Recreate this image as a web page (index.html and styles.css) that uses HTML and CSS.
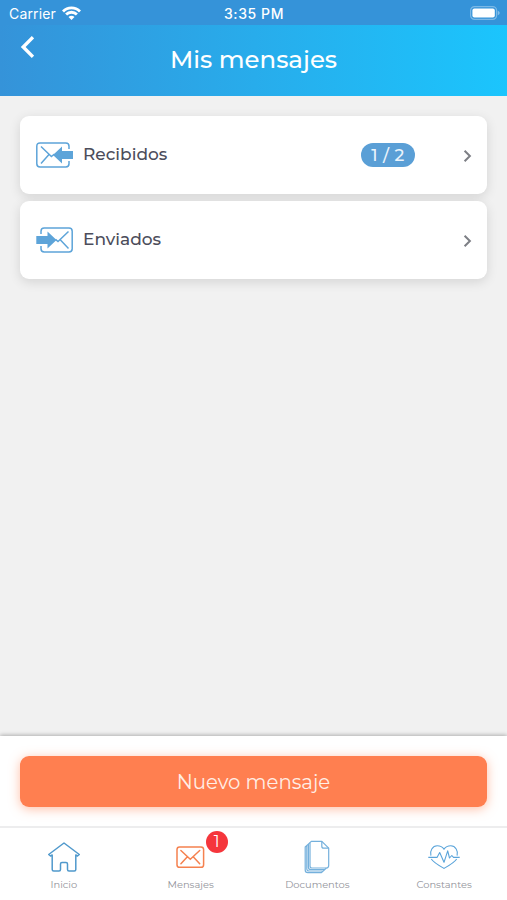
FILE: index.html
```html
<!DOCTYPE html>
<html lang="es">
<head>
    <meta charset="UTF-8">
    <meta name="viewport" content="width=device-width, initial-scale=1.0">
    <title>Mis mensajes</title>
    <link rel="stylesheet" href="styles.css">
</head>
<body>
    <div class="status-bar">
        <div class="carrier">
            <span>Carrier</span>
            <svg width="19" height="14" viewBox="0 0 19 14" fill="none" stroke="#fff" stroke-width="2.8">
                <path d="M1 5.4C5.7 .6 13.3 .6 18 5.4"/>
                <path d="M4.1 8.5C7 5.5 12 5.5 14.9 8.5"/>
                <path d="M9.5 14L6.5 10.9C8.2 9.4 10.8 9.4 12.5 10.9Z" fill="#fff" stroke="none"/>
            </svg>
        </div>
        <span class="time">3:35 PM</span>
        <div class="battery">
            <svg width="31" height="14" viewBox="0 0 31 14">
                <rect x=".6" y=".6" width="26" height="12.8" rx="4" fill="none" stroke="#fff" stroke-opacity=".35" stroke-width="1.2"/>
                <rect x="2.4" y="2.4" width="22.4" height="9.2" rx="2" fill="#fff"/>
                <path d="M27.8 4.8C30.3 5.6 30.3 8.4 27.8 9.2Z" fill="#fff" fill-opacity=".4"/>
            </svg>
        </div>
    </div>
    <header class="header">
        <a class="back">
            <svg width="14" height="22" viewBox="0 0 14 22" fill="none" stroke="#fff" stroke-width="3.4">
                <path d="M13 1.2L3.2 11L13 20.8"/>
            </svg>
        </a>
        <h1>Mis mensajes</h1>
    </header>

    <main class="list">
        <div class="card">
            <svg class="card-icon" width="38" height="26" viewBox="0 0 38 26" fill="none" stroke="#5da4d9" stroke-width="1.5">
                <path d="M33 7V4.2Q33 1 29.8 1H4Q.8 1 .8 4.2V21.8Q.8 25 4 25H29.8Q33 25 33 21.8V19"/>
                <path d="M5 4.5L15.4 14.6L18.5 12M5 21.5L13 12.5"/>
                <path d="M17 13L26 4.5V9H37V17H26V21.5Z" fill="#5da4d9" stroke="none"/>
            </svg>
            <span class="label">Recibidos</span>
            <span class="count">1 / 2</span>
            <svg class="arrow" width="9" height="14" viewBox="0 0 9 14" fill="none" stroke="#7d7f85" stroke-width="2">
                <path d="M1.6 1.7L6.9 7L1.6 12.3"/>
            </svg>
        </div>
        <div class="card">
            <svg class="card-icon" width="38" height="26" viewBox="0 0 38 26" fill="none" stroke="#5da4d9" stroke-width="1.5">
                <path d="M5 7V4.2Q5 1 8.2 1H33Q36.2 1 36.2 4.2V21.8Q36.2 25 33 25H8.2Q5 25 5 21.8V19"/>
                <path d="M32.5 4.5L22 14.6L19.5 12.4M32.5 21.5L24 12.6"/>
                <path d="M20.5 13L11.5 4.5V9H.3V17H11.5V21.5Z" fill="#5da4d9" stroke="none"/>
            </svg>
            <span class="label">Enviados</span>
            <svg class="arrow" width="9" height="14" viewBox="0 0 9 14" fill="none" stroke="#7d7f85" stroke-width="2">
                <path d="M1.6 1.7L6.9 7L1.6 12.3"/>
            </svg>
        </div>
    </main>

    <div class="actions">
        <button class="new-message">Nuevo mensaje</button>
    </div>

    <nav class="tabs">
        <a class="tab">
            <svg width="34" height="34" viewBox="0 0 34 34" fill="none" stroke="#5099cc" stroke-width="1.5" stroke-linejoin="round">
                <path d="M17 3L32.3 14.5L30.5 16L28.8 15V29.5Q28.8 31 27.3 31H22Q20.5 31 20.5 29.5V24Q20.5 22.5 19 22.5H15Q13.5 22.5 13.5 24V29.5Q13.5 31 12 31H6.7Q5.2 31 5.2 29.5V15L3.5 16L1.7 14.5Z"/>
            </svg>
            <span class="tab-name">Inicio</span>
        </a>
        <a class="tab">
            <svg width="34" height="34" viewBox="0 0 34 34" fill="none" stroke="#f5814f" stroke-width="1.5" stroke-linecap="round">
                <rect x="3" y="7" width="26.6" height="20.3" rx="2.6"/>
                <path d="M6.9 10.5L16.3 19.2L25.7 10.5M6.9 23.8L13.4 16.7M25.7 23.8L19.2 16.7"/>
            </svg>
            <span class="badge">1</span>
            <span class="tab-name">Mensajes</span>
        </a>
        <a class="tab">
            <svg width="34" height="34" viewBox="0 0 34 34" fill="none" stroke="#74b0dc" stroke-width="1.2" stroke-linejoin="round">
                <path d="M11.3 1.3H21.8L28.7 8.2V25.5Q28.7 28 26.2 28H11.8Q10 28 10 26V2.6Z"/>
                <path d="M21.8 1.3V6.2Q21.8 8.2 23.8 8.2H28.7"/>
                <path d="M10 2.6L5.2 7V30Q5.2 32.6 7.8 32.6H21.5L26.4 28M8.4 4.2V27.2Q8.4 29.5 10.7 29.5H24.8M6.8 5.6V28.8Q6.8 31 9 31H23.2"/>
            </svg>
            <span class="tab-name">Documentos</span>
        </a>
        <a class="tab">
            <svg width="34" height="34" viewBox="0 0 34 34" fill="none" stroke="#5aa4da" stroke-width="1.1" stroke-linejoin="round">
                <path d="M3.9 15.7C2.5 11 5.6 5.8 10.2 5.8C13.2 5.8 15.5 7 17 9.3C18.5 7 20.8 5.8 23.8 5.8C28.4 5.8 31.5 11 30.1 15.7M4.3 19C6.5 22.5 12.5 25.8 17 28.4C21.5 25.8 27.5 22.5 29.7 19"/>
                <path d="M1.3 17.4H10L12.7 12.5L17 22.3L20.7 10.8L22.5 18L24.8 15.5L26.5 17.4H32.7"/>
            </svg>
            <span class="tab-name">Constantes</span>
        </a>
    </nav>
</body>
</html>
```

FILE: styles.css
```css
* {
    box-sizing: border-box;
}
body {
    margin: 0;
    height: 900px;
    display: flex;
    flex-direction: column;
    overflow: hidden;
    background-color: #f1f1f1;
    font-family: Montserrat, Inter, sans-serif;
}
svg {
    display: block;
    flex: none;
}
.status-bar {
    display: grid;
    grid-template-columns: 1fr auto 1fr;
    align-items: center;
    height: 25px;
    padding: 2px 6px 0 9px;
    background-color: #3593d9;
    color: white;
    font-family: Inter, sans-serif;
    font-size: 14px;
}
.carrier {
    display: flex;
    align-items: center;
    gap: 6px;
    letter-spacing: 0.15px;
}
.carrier svg {
    margin-top: -2px;
}
.time {
    margin-right: 2px;
    font-weight: 500;
    letter-spacing: 0.6px;
}
.battery {
    display: flex;
    justify-content: flex-end;
    margin-top: -2px;
}
.header {
    display: grid;
    grid-template-columns: 40px 1fr 40px;
    height: 71px;
    padding: 0 20px;
    background: linear-gradient(to right, #3593d9, #1bc5fd);
    color: white;
}
.back {
    padding-top: 11px;
}
h1 {
    margin: 0;
    padding-top: 18px;
    text-align: center;
    font-size: 24.4px;
    font-weight: 500;
    line-height: 32px;
}
.list {
    flex: 1;
    display: flex;
    flex-direction: column;
    gap: 7px;
    padding: 20px 20px 0;
}
.card {
    display: flex;
    align-items: center;
    height: 78px;
    padding: 0 15px 0 16px;
    border-radius: 9px;
    background: white;
    box-shadow: 0 3px 12px rgba(0, 0, 0, 0.12);
}
.label {
    margin-left: 9px;
    margin-top: -2px;
    color: #4c4d5b;
    font-size: 17px;
    font-weight: 500;
}
.count {
    width: 54px;
    height: 24px;
    margin-left: auto;
    margin-right: 48px;
    border-radius: 12px;
    background-color: #5a9fd6;
    color: #eaf4fc;
    font-size: 17px;
    font-weight: 500;
    line-height: 24px;
    letter-spacing: 0.5px;
    text-align: center;
}
.arrow {
    margin-top: 2px;
    margin-left: auto;
}
.count + .arrow {
    margin-left: 0;
}
.actions {
    height: 90px;
    padding: 20px 20px 0;
    background: white;
    box-shadow: 0 -1px 4px rgba(0, 0, 0, 0.28);
}
.new-message {
    display: block;
    width: 100%;
    height: 51px;
    border: none;
    border-radius: 9px;
    background-color: #ff7f50;
    box-shadow: 0 2px 11px rgba(255, 127, 80, 0.5);
    color: #ffeee6;
    font-family: inherit;
    font-size: 19.7px;
    font-weight: 400;
    cursor: pointer;
}
.tabs {
    display: grid;
    grid-template-columns: repeat(4, 1fr);
    height: 74px;
    border-top: 2px solid #ededee;
    background: white;
    position: relative;
}
.tab {
    display: flex;
    flex-direction: column;
    align-items: center;
    padding: 12px 0 0 1px;
    position: relative;
    color: #92939a;
    font-size: 9.9px;
    line-height: 12px;
}
.tab-name {
    margin-top: 4px;
}
.badge {
    position: absolute;
    top: 3px;
    left: 79px;
    width: 22px;
    height: 22px;
    border-radius: 50%;
    background-color: #f5363c;
    color: white;
    font-size: 16px;
    line-height: 22px;
    text-align: center;
}
```
